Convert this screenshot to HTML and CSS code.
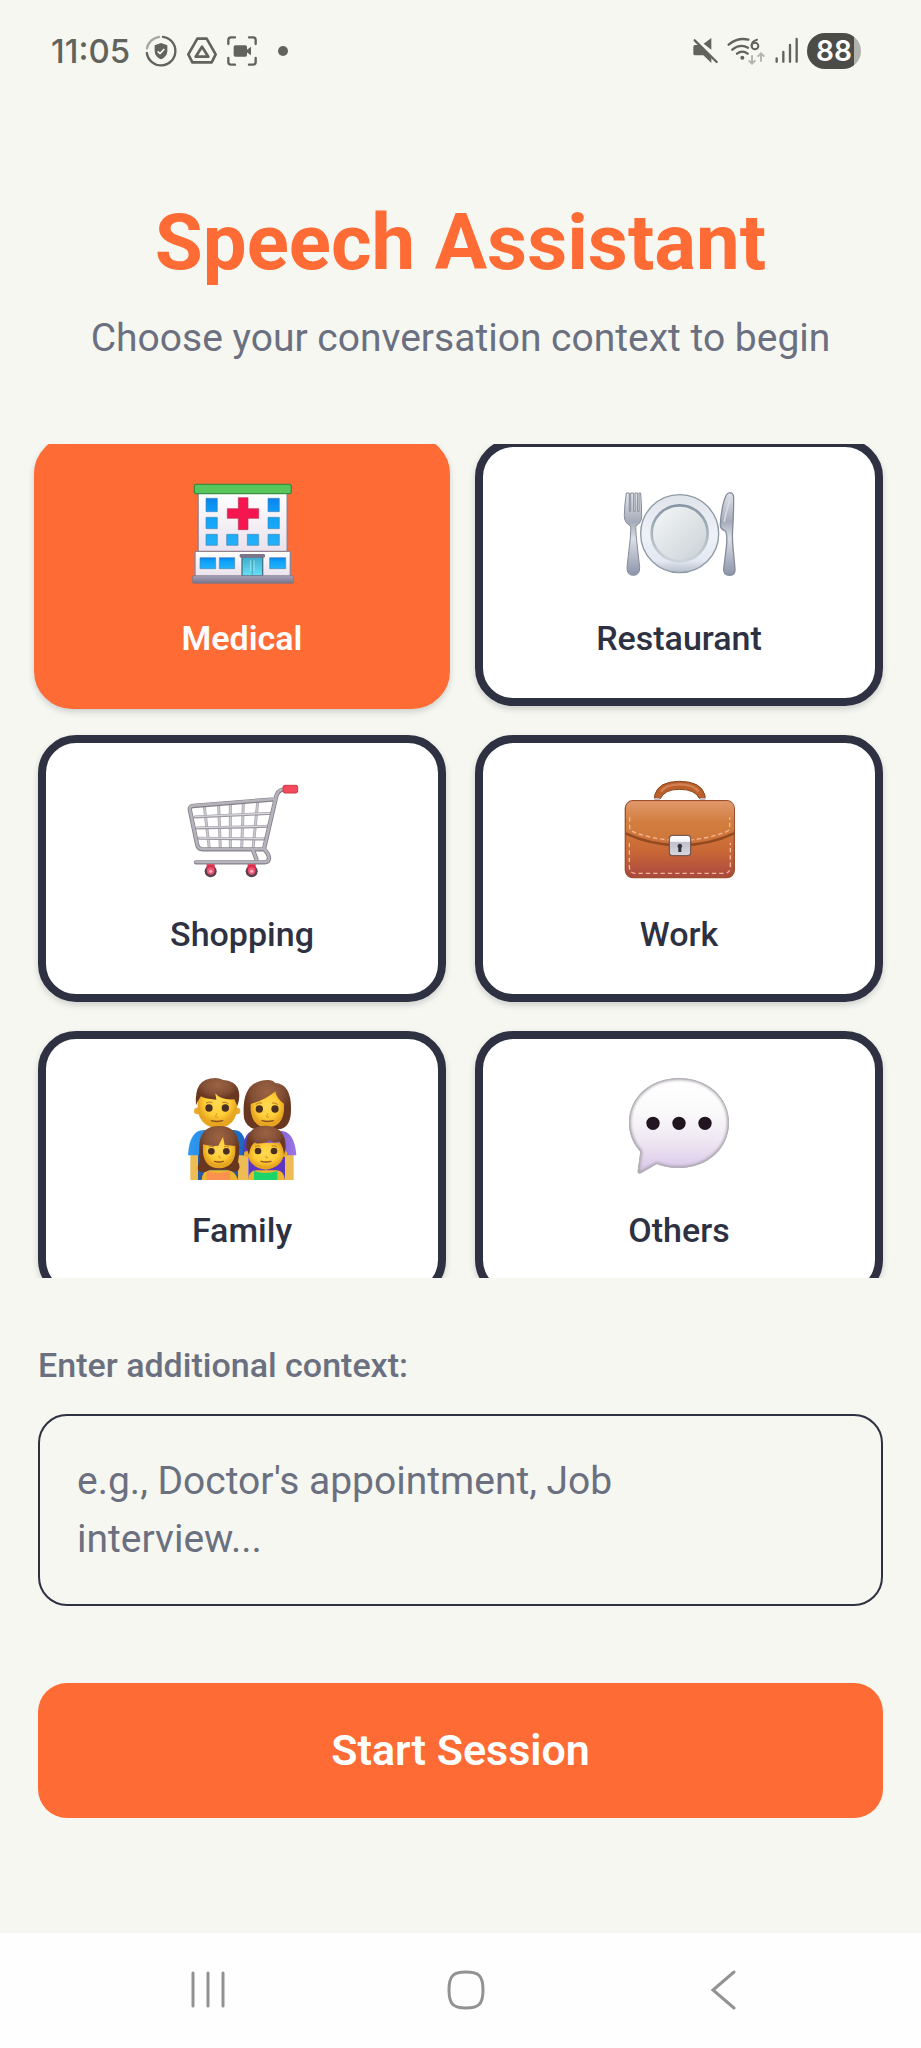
FILE: index.html
```html
<!DOCTYPE html>
<html lang="en">
<head>
<meta charset="utf-8">
<meta name="viewport" content="width=device-width, initial-scale=1">
<title>Speech Assistant</title>
<link rel="stylesheet" href="styles.css">
</head>
<body>
<div class="app">
  <div class="status">
    <div class="status-left">
      <span class="time">11:05</span>
      <div class="status-icons">
        <svg width="32" height="32" viewBox="0 0 96 96" aria-hidden="true">
          <g fill="none" stroke="#62635d" stroke-width="7" stroke-linecap="round">
            <path d="M54 5.500A43 43 0 1 1 5.500 54"/>
            <path d="M6 40A43 43 0 0 1 42 5.500" stroke="#a5a69f"/>
          </g>
          <path d="M48 24l19 7v16c0 13-8 21-19 26-11-5-19-13-19-26V31z" fill="#62635d"/>
          <path d="M38 49l7 7 13-14" fill="none" stroke="#f6f7f1" stroke-width="5"/>
        </svg>
        <svg width="30" height="30" viewBox="0 0 90 90" fill="none" stroke="#62635d" stroke-width="8" stroke-linejoin="round" aria-hidden="true">
          <path d="M31 8h28l27 47-12 24H16L4 55z"/>
          <path d="M45 32l19 30H26z"/>
        </svg>
        <svg width="30" height="30" viewBox="0 0 90 90" aria-hidden="true">
          <path d="M4 24V12q0-8 8-8h12M66 4h12q8 0 8 8v12M86 66v12q0 8-8 8H66M24 86H12q-8 0-8-8V66" fill="none" stroke="#62635d" stroke-width="7" stroke-linecap="round"/>
          <rect x="20" y="28" width="40" height="34" rx="5" fill="#62635d"/>
          <path d="M58 43l14-11v26L58 48z" fill="#62635d"/>
        </svg>
      </div>
      <span class="dot"></span>
    </div>
    <div class="status-right">
      <svg width="28" height="28" viewBox="62 82 84 84" aria-hidden="true">
        <path d="M66 111q0-5 5-5h14l35 37v17l-24-23H71q-5 0-5-5zM97 102l23-17v35z" fill="#62635d"/>
        <path d="M76 90l64 64" stroke="#f6f7f1" stroke-width="5"/>
        <path d="M70 92l66 65" stroke="#62635d" stroke-width="7" stroke-linecap="round"/>
      </svg>
      <svg width="40" height="30" viewBox="176 78 120 90" aria-hidden="true">
        <g fill="none" stroke="#62635d" stroke-width="7" stroke-linecap="round">
          <path d="M181 104Q209 81 240 89M192 119Q215 100 239 113M206 131Q222 119 238 131"/>
          <path d="M266 89Q249 94 250 108" stroke-width="6"/>
          <circle cx="260" cy="108" r="10" stroke-width="6"/>
        </g>
        <circle cx="222" cy="143" r="6" fill="#62635d"/>
        <path d="M251 136v24M241 151l10 10 10-10M278 155v-24M268 140l10-10 10 10" fill="none" stroke="#b5b6af" stroke-width="6"/>
      </svg>
      <svg width="26" height="28" viewBox="312 82 78 84" aria-hidden="true">
        <path d="M320 146v10M340 127v29M360 106v50M380 88v68" stroke="#62635d" stroke-width="7" stroke-linecap="round"/>
      </svg>
      <span class="battery">88</span>
    </div>
  </div>

  <header class="intro">
    <h1>Speech Assistant</h1>
    <p>Choose your conversation context to begin</p>
  </header>

  <main class="choices">
    <div class="grid">
      <button class="card selected" type="button" aria-pressed="true">
        <svg class="emoji" viewBox="498 162 336 312" aria-hidden="true">
          <defs>
            <linearGradient id="wall" x2="0" y2="1"><stop stop-color="#fff"/><stop offset="1" stop-color="#e9e1ec"/></linearGradient>
            <linearGradient id="pane" x2="0" y2="1"><stop stop-color="#0a83ee"/><stop offset=".35" stop-color="#0ea2f8"/><stop offset="1" stop-color="#24b1f8"/></linearGradient>
            <linearGradient id="base" x2="0" y2="1"><stop stop-color="#a7a3b8"/><stop offset="1" stop-color="#77738a"/></linearGradient>
            <linearGradient id="door" x2="0" y2="1"><stop stop-color="#3eaccd"/><stop offset="1" stop-color="#68e2f8"/></linearGradient>
          </defs>
          <rect x="534" y="184" width="268" height="180" fill="url(#wall)" stroke="#94828e" stroke-width="5"/>
          <rect x="525" y="361" width="286" height="76" rx="3" fill="url(#wall)" stroke="#94828e" stroke-width="4"/>
          <rect x="523" y="160" width="291" height="28" rx="6" fill="#58c65b" stroke="#388e42" stroke-width="4"/>
          <g fill="url(#pane)" stroke="#4c88b5" stroke-width="2">
            <path d="M558 202h34v40h-34zM744 202h34v40h-34zM558 259h34v34h-34zM744 259h34v34h-34zM558 310h34v33h-34zM620 310h34v33h-34zM682 310h34v33h-34zM744 310h34v33h-34z"/>
            <path d="M540 380h47v33h-47zM598 380h46v33h-46zM749 380h48v33h-48z"/>
          </g>
          <path d="M655 200h29v33h32v29h-32v34h-29v-34h-33v-29h33z" fill="#f5154f" stroke="#bd3157" stroke-width="2"/>
          <rect x="666" y="378" width="62" height="57" fill="url(#door)" stroke="#487489" stroke-width="4"/>
          <path d="M697 385v49" stroke="#49a5be" stroke-width="3"/>
          <path d="M692 388v32M702 388v32" stroke="#b3f5fb" stroke-width="2"/>
          <rect x="659" y="369" width="76" height="11" rx="4" fill="#7c7488"/>
          <rect x="517" y="434" width="304" height="23" rx="5" fill="url(#base)" stroke="#777284" stroke-width="2"/>
        </svg>
        <span class="label">Medical</span>
      </button>

      <button class="card" type="button" aria-pressed="false">
        <svg class="emoji" viewBox="488 162 336 312" aria-hidden="true">
          <defs>
            <linearGradient id="rim" x2="0" y2="1"><stop stop-color="#dfe4ea"/><stop offset=".5" stop-color="#eef2f8"/><stop offset=".85" stop-color="#e3e8f2"/><stop offset="1" stop-color="#b4bdc9"/></linearGradient>
            <linearGradient id="plate" x2="1" y2="1"><stop stop-color="#f6f8f9"/><stop offset="1" stop-color="#c8d0d4"/></linearGradient>
            <linearGradient id="well" x2="0" y2="1"><stop stop-color="#8896a3"/><stop offset="1" stop-color="#cbd4db"/></linearGradient>
            <linearGradient id="steel" x2="0" y2="1"><stop stop-color="#dfe3ea"/><stop offset=".35" stop-color="#a6abb9"/><stop offset=".55" stop-color="#dadfe7"/><stop offset="1" stop-color="#8d94a8"/></linearGradient>
          </defs>
          <circle cx="658" cy="308" r="117" fill="url(#rim)" stroke="#8e9aa5" stroke-width="4"/>
          <circle cx="658" cy="307" r="84" fill="url(#plate)" stroke="url(#well)" stroke-width="8"/>
          <path d="M498 186h9v55h4v-55h9v55h4v-55h8v55h4v-55h5q3 38 3 68 0 22-17 30-2 7 2 45l9 80q1 24-19 24t-19-24l9-80q4-38 1-45-18-8-18-30 0-30 6-68z" fill="url(#steel)" stroke="#858c9b" stroke-width="3"/>
          <path d="M780 280q4-60 18-88 7-11 17-5 5 4 5 14 0 48-3 93-2 25 1 55l6 65q1 19-16 19-19 0-18-19l8-65q4-38-3-49-16-6-15-20z" fill="url(#steel)" stroke="#858c9b" stroke-width="4"/>
          <path d="M809 207q-14 40-17 66" fill="none" stroke="#dce1e8" stroke-width="6" opacity=".7"/>
        </svg>
        <span class="label">Restaurant</span>
      </button>

      <button class="card" type="button" aria-pressed="false">
        <svg class="emoji" viewBox="498 183 336 312" aria-hidden="true">
          <g fill="none" stroke-linejoin="round" stroke-linecap="round">
            <path d="M553 260l15 126M596 256l5 130M631 253v133M670 250l-5 136M713 247l-14 139" stroke="#aaa6ae" stroke-width="9"/>
            <path d="M553 260l15 126M596 256l5 130M631 253v133M670 250l-5 136M713 247l-14 139" stroke="#d0ccd3" stroke-width="4"/>
            <path d="M525 291l230-11M530 324l219-5M537 355l203 2" stroke="#9c98a1" stroke-width="9"/>
            <path d="M525 290l230-11M530 323l219-5M537 354l203 2" stroke="#d8d5db" stroke-width="4"/>
            <path d="M791 208q-20 3-24 28l-35 151M764 238l-245 20q-12 1-9 14l22 104q3 12 16 12h184q15 13 15 27-1 12-14 12H528M699 391l10 26" stroke="#85818a" stroke-width="13"/>
            <path d="M791 207q-20 3-24 28l-35 151M764 237l-245 20q-12 1-9 14l22 104q3 12 16 12h184q15 13 15 27-1 12-14 12H528M699 391l10 26" stroke="#b7b3bc" stroke-width="8"/>
          </g>
          <rect x="789" y="196" width="44" height="23" rx="6" fill="#f34b5b" stroke="#d23745" stroke-width="3"/>
          <g>
            <circle cx="572" cy="454" r="18" fill="#564150"/><circle cx="695" cy="454" r="18" fill="#564150"/>
            <path d="M560 433h24v20h-24zM683 433h24v20h-24z" fill="#dc304e"/>
            <circle cx="572" cy="453" r="11" fill="#f25271"/><circle cx="695" cy="453" r="11" fill="#f25271"/>
            <circle cx="572" cy="454" r="5" fill="#ffb0bf"/><circle cx="695" cy="454" r="5" fill="#ffb0bf"/>
          </g>
        </svg>
        <span class="label">Shopping</span>
      </button>

      <button class="card" type="button" aria-pressed="false">
        <svg class="emoji" viewBox="488 183 336 312" aria-hidden="true">
          <defs>
            <linearGradient id="bag" x2="0" y2="1"><stop stop-color="#df8f5b"/><stop offset=".3" stop-color="#d37c3d"/><stop offset=".65" stop-color="#c96836"/><stop offset="1" stop-color="#a9483f"/></linearGradient>
            <linearGradient id="flap" x2="0" y2="1"><stop stop-color="#e2986c"/><stop offset=".5" stop-color="#d27e3f"/><stop offset="1" stop-color="#cf763a"/></linearGradient>
            <linearGradient id="lock" x2="0" y2="1"><stop stop-color="#fff"/><stop offset=".3" stop-color="#f4f3f7"/><stop offset=".34" stop-color="#c0c0cd"/><stop offset="1" stop-color="#d8d6df"/></linearGradient>
          </defs>
          <path d="M583 236v-10q10-42 75-42t76 42v10h-16q-14-28-60-28t-58 28z" fill="#bb602b" stroke="#87451f" stroke-width="3"/>
          <path d="M602 215q14-22 56-22t57 22" fill="none" stroke="#d28152" stroke-width="7"/>
          <path d="M582 234h16v9h-16zM719 234h16v9h-16z" fill="#c4c0c5"/>
          <rect x="495" y="242" width="327" height="231" rx="23" fill="url(#bag)" stroke="#9d4f2d" stroke-width="4"/>
          <path d="M496 340q74 35 162 36 90-1 163-36" fill="none" stroke="#924b20" stroke-width="8"/>
          <path d="M497 331v-65q0-22 22-22h280q22 0 22 22v65q-73 36-163 36-89 0-161-36z" fill="url(#flap)"/>
          <g fill="none" stroke="#f3b79a" stroke-width="4" stroke-dasharray="13 9">
            <path d="M508 292v31q0 7 8 11 65 27 142 27t142-27q8-4 8-11v-31"/>
            <path d="M507 369v70q0 21 20 21h263q20 0 20-21v-70"/>
          </g>
          <rect x="627" y="346" width="64" height="61" rx="9" fill="url(#lock)" stroke="#795a52" stroke-width="4"/>
          <path d="M654 384v12h9v-12a7 7 0 1 0-9 0z" fill="#34313c"/>
        </svg>
        <span class="label">Work</span>
      </button>

      <button class="card" type="button" aria-pressed="false">
        <svg class="emoji" viewBox="498 171 336 312" aria-hidden="true">
          <defs>
            <radialGradient id="skin" cy=".4"><stop stop-color="#ffda54"/><stop offset=".65" stop-color="#ffcd36"/><stop offset="1" stop-color="#e7a420"/></radialGradient>
            <radialGradient id="hair" cy=".25"><stop stop-color="#9c6343"/><stop offset=".65" stop-color="#835036"/><stop offset="1" stop-color="#69371f"/></radialGradient>
            <linearGradient id="blue"><stop stop-color="#2f9af2"/><stop offset="1" stop-color="#1a65bd"/></linearGradient>
            <linearGradient id="violet"><stop stop-color="#5639bb"/><stop offset="1" stop-color="#9b77e6"/></linearGradient>
          </defs>
          <path d="M511 400h23v80h-23zM654 400h30v80h-30zM795 400h26v80h-26z" fill="#edbd54"/>
          <path d="M534 400h120v80H534z" fill="#28599c"/><path d="M685 400h110v80H685z" fill="#5c35c0"/>
          <path d="M504 406q4-76 48-76h90q38 0 38 76z" fill="url(#blue)"/>
          <path d="M668 406q0-74 36-74h76q44 0 49 74z" fill="url(#violet)"/>
          <!-- father -->
          <circle cx="532" cy="273" r="10" fill="#e8ad30"/><circle cx="651" cy="273" r="10" fill="#e8ad30"/>
          <path d="M533 230q10-39 60-39 50 0 58 39v42q-8 49-59 53-49-4-59-53z" fill="url(#skin)"/>
          <path d="M528 256q-7-82 58-82 12 0 24 6 47 4 48 47 0 15-6 31l-9-20q-42 3-57-18l3 19q-39-3-46-10-9 12-15 27z" fill="url(#hair)"/>
          <!-- mother -->
          <path d="M672 295q-11-114 72-115 15 0 22 9 47 3 47 76 1 55-32 62h-77q-25-5-32-32z" fill="url(#hair)"/>
          <path d="M692 252q45-12 74-38 4 23 26 37v20q-4 49-50 53-45-4-50-53z" fill="url(#skin)"/>
          <!-- shoulders of the children -->
          <path d="M545 480q2-28 24-29h57q19 2 28 29zM684 480q2-28 25-29h62q20 1 24 29z" fill="#edb62e"/>
          <path d="M560 480v-27q35 12 70 0v27z" fill="#fa914f"/><path d="M702 480v-27q35 12 70 0v27z" fill="#1bd46a"/>
          <!-- daughter -->
          <path d="M538 383q-1-65 60-65 57 0 60 65-1 30-4 42 9 15 0 27-13 8-30-3h-55q-17 12-34 3-5-10 4-27-3-18-1-42z" fill="url(#hair)"/>
          <path d="M549 373q23 7 46 4l14-27 5 25 32 3v20q-5 44-48 47-44-2-49-47z" fill="url(#skin)"/>
          <!-- son -->
          <circle cx="681" cy="402" r="9" fill="#e8ad30"/><circle cx="793" cy="402" r="9" fill="#e8ad30"/>
          <path d="M682 368h110v31q-4 43-55 50-51-7-55-50z" fill="url(#skin)"/>
          <path d="M679 384q-3-67 58-67 60 2 60 63-1 12-5 25-1-25-15-41-20 9-27-4-12 12-44 10l6-10q-22 13-25 44z" fill="url(#hair)"/>
          <g fill="#4a3023">
            <circle cx="567" cy="264" r="11"/><circle cx="616" cy="264" r="11"/><circle cx="718" cy="267" r="11"/><circle cx="765" cy="267" r="11"/>
            <circle cx="574" cy="394" r="10"/><circle cx="619" cy="394" r="10"/><circle cx="714" cy="393" r="10"/><circle cx="762" cy="393" r="10"/>
          </g>
          <g fill="none" stroke="#8c5120" stroke-width="4" stroke-linecap="round">
            <path d="M574 302q17 5 34 0M726 302q17 5 34 0M584 424q13 4 26 0M723 424q15 4 30 0"/>
            <path d="M559 249q8-6 17-2M608 247q9-3 16 3M708 253q8-7 17-4M757 249q9-2 16 4M567 381q7-4 14-1M613 380q7-3 14 1M706 380q7-5 14-2M756 378q8-3 14 2" stroke="#ba7925" stroke-width="3"/>
            <path d="M590 281l-4 10 8 1M743 281l-4 10 8 1M597 408v5h5M738 408v5h5" stroke="#dc972a" stroke-width="3"/>
          </g>
        </svg>
        <span class="label">Family</span>
      </button>

      <button class="card" type="button" aria-pressed="false">
        <svg class="emoji" viewBox="488 171 336 312" aria-hidden="true">
          <defs>
            <linearGradient id="bubble" x2="0" y2="1"><stop stop-color="#fff"/><stop offset=".35" stop-color="#fbfafb"/><stop offset=".65" stop-color="#eee8f2"/><stop offset=".88" stop-color="#dfcfec"/><stop offset="1" stop-color="#cfc0df"/></linearGradient>
            <filter id="soft"><feGaussianBlur stdDeviation="5"/></filter>
            <clipPath id="bubbleClip"><path d="M656 174c86 0 150 58 150 134s-64 136-150 136c-24 0-46-4-67-12l-46 27c-7 4-12 1-11-6l8-58c-22-25-34-53-34-87 0-76 64-134 150-134z"/></clipPath>
          </defs>
          <g clip-path="url(#bubbleClip)">
            <path d="M500 170h312v295H500z" fill="url(#bubble)"/>
            <path d="M656 174c86 0 150 58 150 134s-64 136-150 136c-24 0-46-4-67-12l-46 27c-7 4-12 1-11-6l8-58c-22-25-34-53-34-87 0-76 64-134 150-134z" fill="none" stroke="#a39da6" stroke-width="10" filter="url(#soft)"/>
            <path d="M656 174c86 0 150 58 150 134s-64 136-150 136c-24 0-46-4-67-12l-46 27c-7 4-12 1-11-6l8-58c-22-25-34-53-34-87 0-76 64-134 150-134z" fill="none" stroke="#b5b1b7" stroke-width="6"/>
          </g>
          <g fill="#21151f"><circle cx="578" cy="310" r="20"/><circle cx="656" cy="310" r="20"/><circle cx="734" cy="310" r="20"/></g>
        </svg>
        <span class="label">Others</span>
      </button>
    </div>
  </main>

  <form class="details">
    <label for="context">Enter additional context:</label>
    <textarea id="context" rows="2" placeholder="e.g., Doctor's appointment, Job&#10;interview..."></textarea>
    <button class="start" type="button">Start Session</button>
  </form>

  <nav class="navbar" aria-label="System">
    <button type="button" aria-label="Recent apps">
      <svg width="40" height="40" viewBox="0 0 40 40"><path d="M5 3v33M20 3v33M35 3v33"/></svg>
    </button>
    <button type="button" aria-label="Home">
      <svg width="40" height="40" viewBox="0 0 40 40"><path d="M20 2C33 2 37 6 37 20S33 38 20 38 3 34 3 20 7 2 20 2z"/></svg>
    </button>
    <button type="button" aria-label="Back">
      <svg width="40" height="40" viewBox="0 0 40 40"><path d="M30 2L9 20 30 38"/></svg>
    </button>
  </nav>
</div>
</body>
</html>
```
FILE: styles.css
```css
* { box-sizing: border-box; }

body {
  margin: 0;
  background: #f6f7f1;
  font-family: Roboto, "Liberation Sans", sans-serif;
  color: #2d3142;
}

button { font: inherit; color: inherit; cursor: pointer; }

.app {
  display: flex;
  flex-direction: column;
  height: 100vh;
}

/* status bar */
.status {
  flex: none;
  display: flex;
  justify-content: space-between;
  align-items: center;
  height: 102px;
  padding: 0 60px 0 51px;
  color: #62635d;
}
.status-left, .status-right, .status-icons { display: flex; align-items: center; }
.status-icons { gap: 10px; margin-left: 15px; }
.status-right { gap: 7px; }
.time { font: 500 33px/40px Inter, Roboto, sans-serif; }
.dot {
  width: 10px;
  height: 10px;
  margin-left: 21px;
  border-radius: 50%;
  background: #62635d;
}
.battery {
  width: 54px;
  border-radius: 18px;
  background: linear-gradient(90deg, #4b4b47 47px, #b1b2ab 47px);
  color: #fff;
  text-align: center;
  font: 600 28px/36px Inter, Roboto, sans-serif;
}

/* heading */
.intro {
  flex: none;
  padding: 93px 38px 77px;
  text-align: center;
}
h1 {
  margin: 0 0 18px;
  color: #ff6b35;
  font-size: 78px;
  line-height: 96px;
  font-weight: 700;
}
.intro p {
  margin: 0;
  color: #6b7080;
  font-size: 39px;
  line-height: 58px;
}

/* context cards */
.choices {
  flex: 1;
  min-height: 0;
  overflow-y: auto;
  scrollbar-width: none;
  padding: 0 38px;
}
.grid {
  display: grid;
  grid-template-columns: 1fr 1fr;
  gap: 29px;
  margin-top: -5px;
}
.card {
  display: flex;
  flex-direction: column;
  align-items: center;
  justify-content: center;
  gap: 25px;
  padding: 38px 8px 36px;
  border: 8px solid #2d3142;
  border-radius: 38px;
  background: #fff;
  box-shadow: 0 3px 6px rgba(45, 49, 66, .2);
}
.card.selected {
  margin: -3px -4px;
  border-color: #ff6b35;
  background: #ff6b35;
  color: #fff;
}
.emoji { width: 112px; height: 104px; overflow: visible; }
.label { font-size: 34px; line-height: 48px; font-weight: 500; }
.selected .label { font-weight: 600; }

/* form */
.details {
  flex: none;
  display: flex;
  flex-direction: column;
  padding: 63px 38px 115px;
}
.details label {
  margin-bottom: 25px;
  color: #6b7080;
  font-size: 34px;
  line-height: 48px;
  font-weight: 500;
}
textarea {
  display: block;
  width: 100%;
  margin: 0 0 77px;
  padding: 36px 37px;
  border: 2px solid #2d3142;
  border-radius: 29px;
  background: transparent;
  color: #2d3142;
  font: 400 39px/58px Roboto, "Liberation Sans", sans-serif;
  resize: none;
  overflow: hidden;
}
textarea::placeholder { color: #6b7080; opacity: 1; }
.start {
  padding: 38px;
  border: 0;
  border-radius: 29px;
  background: #ff6b35;
  color: #fff;
  font-size: 43px;
  line-height: 59px;
  font-weight: 600;
}

/* navigation bar */
.navbar {
  flex: none;
  display: flex;
  justify-content: space-around;
  align-items: center;
  height: 115px;
  padding: 0 68px 1px 79px;
  background: #fefefe;
}
.navbar button { padding: 0; border: 0; background: none; }
.navbar svg {
  display: block;
  fill: none;
  stroke: #929292;
  stroke-width: 3;
  stroke-linecap: round;
}
```
